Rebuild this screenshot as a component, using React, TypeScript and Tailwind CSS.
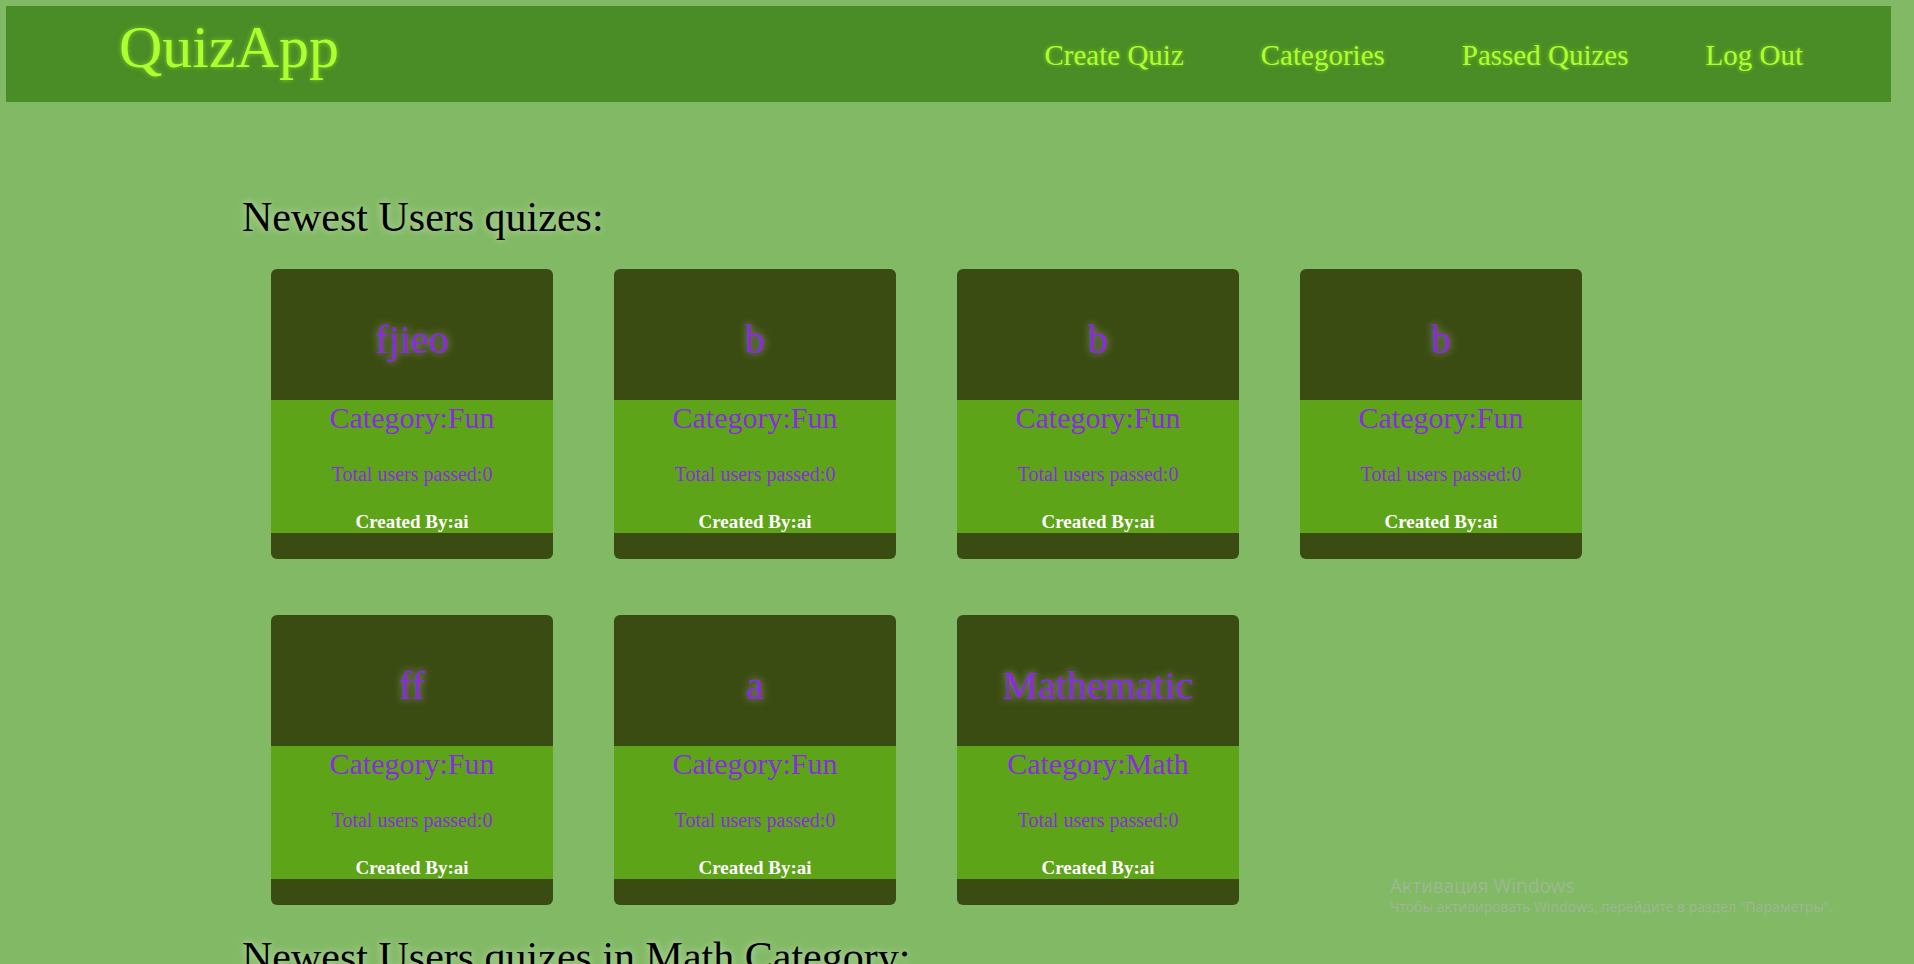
import React from "react";

const quizzes = [
  { title: "fjieo", category: "Fun" },
  { title: "b", category: "Fun" },
  { title: "b", category: "Fun" },
  { title: "b", category: "Fun" },
  { title: "ff", category: "Fun" },
  { title: "a", category: "Fun" },
  { title: "Mathematic", category: "Math" },
];

function QuizCard({ title, category }: { title: string; category: string }) {
  return (
    <div className="w-[282px] h-[290px] rounded-[6px] bg-[#3b4c12] overflow-hidden flex flex-col">
      <div className="h-[131px] flex items-center justify-center pt-[10px]">
        <h3 className="text-[40px] leading-[46px] text-[#8a2be2] [text-shadow:0_0_8px_rgba(255,255,255,0.45)]">
          {title}
        </h3>
      </div>
      <div className="h-[133px] bg-[#5ea418] flex flex-col items-center">
        <p className="mt-[1px] text-[30px] leading-[34px] text-[#8a2be2]">Category:{category}</p>
        <p className="mt-[28px] text-[20px] leading-[23px] text-[#8a2be2]">Total users passed:0</p>
        <p className="mt-[25px] text-[19px] leading-[22px] font-bold text-white">Created By:ai</p>
      </div>
    </div>
  );
}

export default function App() {
  return (
    <div className="relative min-h-screen bg-[#82b964] overflow-hidden font-['Liberation_Serif',serif] pt-[6px]">
      <nav className="ml-[6px] mr-[23px] h-[96px] bg-[#4a8c25] flex items-center justify-between pl-[113px] pr-[88px]">
        <a className="text-[60px] leading-[70px] text-[#adff2f] [text-shadow:0_0_5px_rgba(173,255,47,0.6)] -mt-[14px]">
          QuizApp
        </a>
        <div className="flex items-center gap-[77px] pt-[2px]">
          {["Create Quiz", "Categories", "Passed Quizes", "Log Out"].map((l) => (
            <a
              key={l}
              className="text-[29px] leading-[34px] text-[#adff2f] [text-shadow:0_0_4px_rgba(173,255,47,0.6)]"
            >
              {l}
            </a>
          ))}
        </div>
      </nav>

      <main className="pl-[242px] pt-[92px]">
        <h2 className="text-[42px] leading-[46px] text-black [text-shadow:0_0_8px_rgba(255,255,255,0.55)]">
          Newest Users quizes:
        </h2>
        <div className="mt-[29px] ml-[29px] grid grid-cols-[repeat(4,282px)] gap-x-[61px] gap-y-[56px]">
          {quizzes.map((q, i) => (
            <QuizCard key={i} title={q.title} category={q.category} />
          ))}
        </div>
        <h2 className="mt-[29px] text-[42px] leading-[46px] text-black [text-shadow:0_0_8px_rgba(255,255,255,0.55)]">
          Newest Users quizes in Math Category:
        </h2>
        <div className="h-[300px]" />
      </main>

      <div className="absolute left-[1390px] top-[874px] font-['Noto_Sans',sans-serif] text-[#9cb891] pointer-events-none">
        <div className="text-[19px] leading-[24px]">Активация Windows</div>
        <div className="text-[14px] leading-[18px]">Чтобы активировать Windows, перейдите в раздел "Параметры".</div>
      </div>
    </div>
  );
}
